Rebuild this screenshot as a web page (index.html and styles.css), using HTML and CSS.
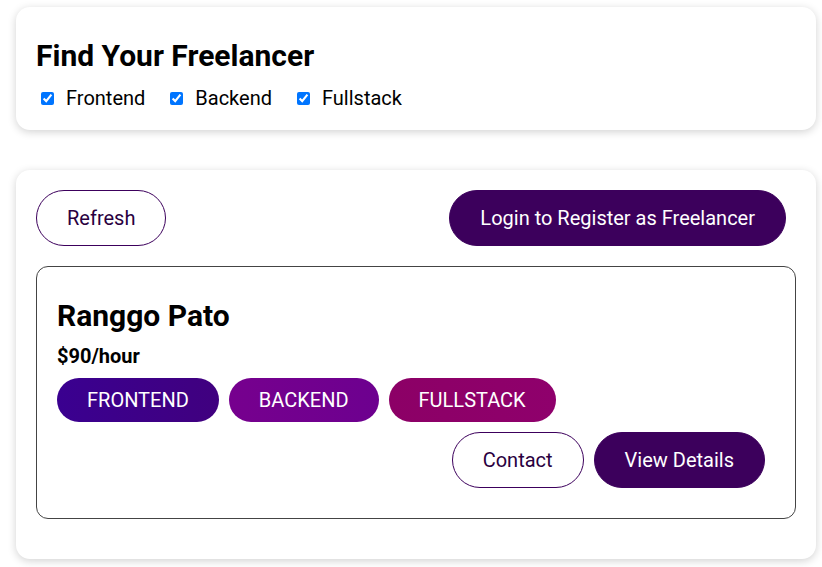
FILE: index.html
```html
<!DOCTYPE html>
<html>
<head>
<meta charset="utf-8">
<link rel="stylesheet" href="styles.css">
</head>
<body>
<div class="page">
  <section class="card filter">
    <h1 class="title">Find Your Freelancer</h1>
    <div class="checks">
      <label class="check"><input type="checkbox" checked>Frontend</label>
      <label class="check"><input type="checkbox" checked>Backend</label>
      <label class="check"><input type="checkbox" checked>Fullstack</label>
    </div>
  </section>
  <section class="card list">
    <div class="toolbar">
      <button class="btn btn-outline">Refresh</button>
      <button class="btn btn-solid">Login to Register as Freelancer</button>
    </div>
    <article class="freelancer">
      <h2 class="name">Ranggo Pato</h2>
      <div class="rate">$90/hour</div>
      <div class="tags">
        <span class="tag tag-frontend">FRONTEND</span>
        <span class="tag tag-backend">BACKEND</span>
        <span class="tag tag-fullstack">FULLSTACK</span>
      </div>
      <div class="actions">
        <button class="btn btn-outline">Contact</button>
        <button class="btn btn-solid">View Details</button>
      </div>
    </article>
  </section>
</div>
</body>
</html>
```
FILE: styles.css
```css
* { box-sizing: border-box; }
html, body { margin: 0; padding: 0; background: #fff; }
body { font-family: Roboto, "Liberation Sans", Arial, sans-serif; color: #000; }
.page { width: 800px; margin-left: 16px; padding-top: 7px; padding-bottom: 20px; }
.card {
  background: #fff;
  border-radius: 14px;
  box-shadow: 0 2px 8px rgba(0,0,0,0.18);
  padding: 20px;
}
.filter { height: 123px; padding-top: 31px; }
.title { font-size: 30px; font-weight: 700; margin: 0; line-height: 35px; }
.checks { display: flex; align-items: center; margin-top: 14px; }
.check { display: flex; align-items: center; font-size: 20px; line-height: 23px; margin-right: 20px; }
.check input { width: 13px; height: 13px; margin: 0 12px 0 5px; accent-color: #0075ff; }
.list { margin-top: 40px; padding-bottom: 40px; }
.toolbar { display: flex; justify-content: space-between; }
.btn {
  font-family: inherit;
  font-size: 20px;
  line-height: 22px;
  padding: 16px 30px;
  border-radius: 28px;
  border: 1px solid #3c005c;
  margin-right: 10px;
  cursor: pointer;
}
.btn-outline { background: #fff; color: #2a0040; }
.btn-solid { background: #3c005c; color: #fff; }
.freelancer {
  margin-top: 20px;
  border: 1px solid #444;
  border-radius: 12px;
  padding: 20px;
}
.name { font-size: 30px; font-weight: 700; margin: 11px 0 0; line-height: 35px; }
.rate { font-size: 20px; font-weight: 700; line-height: 23px; margin-top: 12px; }
.tags { display: flex; margin-top: 10px; }
.tag {
  font-size: 20px;
  line-height: 22px;
  padding: 11px 30px;
  border-radius: 22px;
  color: #fff;
  margin-right: 10px;
}
.tag-frontend { background: linear-gradient(90deg, #3a0090, #40007f); }
.tag-backend { background: linear-gradient(90deg, #76008e, #6d008f); }
.tag-fullstack { background: linear-gradient(90deg, #8c0066, #8f006c); }
.actions { display: flex; justify-content: flex-end; margin-top: 10px; margin-bottom: 10px; }
```
